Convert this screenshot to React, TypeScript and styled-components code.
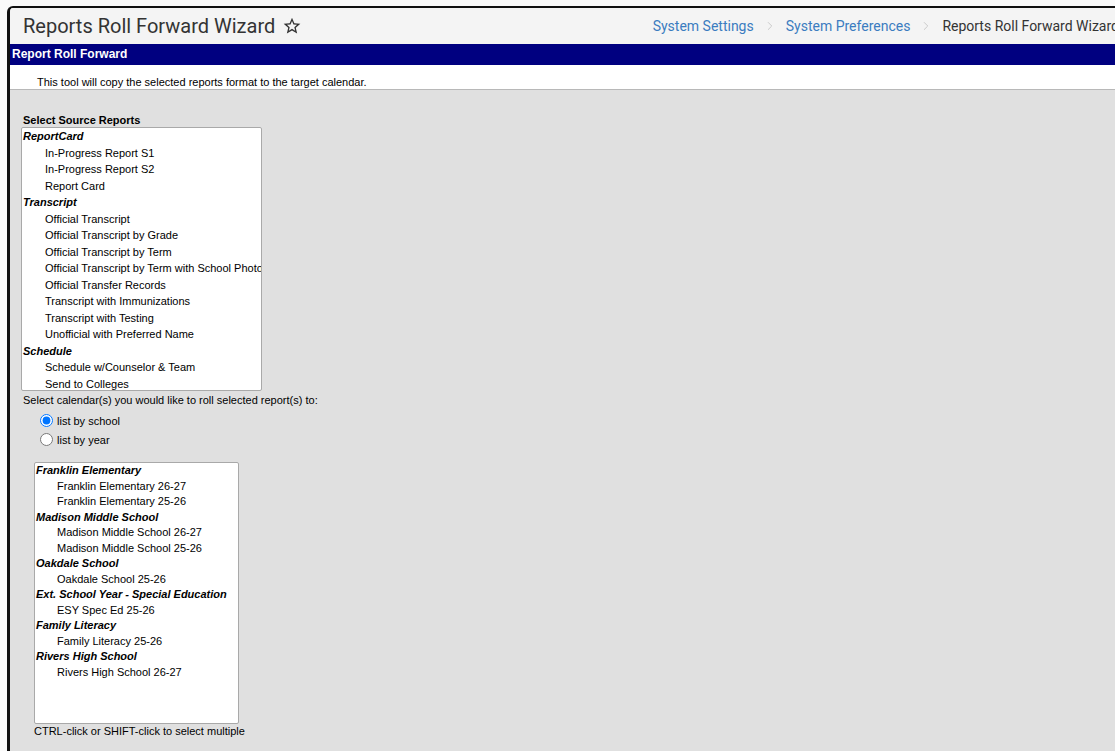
import React from "react";
import { styled, createGlobalStyle } from "styled-components";
import { MdStarBorder } from "react-icons/md";
import { ChevronRight } from "lucide-react";

const GlobalStyle = createGlobalStyle`
  html, body {
    margin: 0;
    padding: 0;
    background: #fafafa;
  }
  body {
    font-family: "Liberation Sans", Arial, sans-serif;
    color: #000;
  }
`;

const Page = styled.div`
  padding: 6px 0 0 7px;
  height: 745px;
  overflow: hidden;
`;

const Frame = styled.div`
  border-top: 2px solid #111;
  border-left: 3px solid #111;
  border-top-left-radius: 6px;
  height: 100%;
  overflow: hidden;
  background: #e0e0e0;
  display: flex;
  flex-direction: column;
`;

const Header = styled.header`
  height: 36px;
  flex-shrink: 0;
  background: #f4f4f4;
  display: flex;
  align-items: center;
  padding-left: 13px;
  font-family: Roboto, "Liberation Sans", sans-serif;
`;

const PageTitle = styled.h1`
  margin: 0;
  font-size: 20px;
  font-weight: 400;
  color: #333;
  display: flex;
  align-items: center;
  gap: 7px;
  white-space: nowrap;
`;

const Crumbs = styled.nav`
  margin-left: auto;
  margin-right: -4px;
  display: flex;
  align-items: center;
  gap: 9px;
  font-size: 14px;
  white-space: nowrap;
`;

const Crumb = styled.span<{ $current?: boolean }>`
  color: ${(p) => (p.$current ? "#333" : "#3b7cc0")};
`;

const Banner = styled.div`
  height: 21px;
  flex-shrink: 0;
  background: #000080;
  color: #fff;
  font-weight: bold;
  font-size: 12px;
  line-height: 21px;
  padding-left: 2px;
`;

const Intro = styled.div`
  height: 24px;
  flex-shrink: 0;
  background: #fff;
  border-bottom: 1px solid #b8b8b8;
  font-size: 11px;
  line-height: 34px;
  padding-left: 27px;
`;

const Body = styled.main`
  padding: 24px 0 0 11px;
  font-size: 11px;
  display: flex;
  flex-direction: column;
  align-items: flex-start;
`;

const FieldLabel = styled.div`
  font-weight: bold;
  padding-left: 2px;
  line-height: 13px;
`;

const ListBox = styled.div<{ $width: number; $height: number; $inset?: number; $top?: number }>`
  width: ${(p) => p.$width}px;
  height: ${(p) => p.$height}px;
  margin: ${(p) => p.$top ?? 0}px 0 0 ${(p) => p.$inset ?? 0}px;
  box-sizing: border-box;
  background: #fff;
  border: 1px solid #a9a9a9;
  border-radius: 2px;
  overflow: hidden;
`;

const GroupLabel = styled.div<{ $row: number }>`
  font-weight: bold;
  font-style: italic;
  padding-left: 1px;
  height: ${(p) => p.$row}px;
  line-height: ${(p) => p.$row}px;
  white-space: nowrap;
`;

const Option = styled.div<{ $indent: number; $row: number }>`
  padding-left: ${(p) => p.$indent}px;
  height: ${(p) => p.$row}px;
  line-height: ${(p) => p.$row}px;
  white-space: nowrap;
`;

const Prompt = styled.div`
  padding-left: 2px;
  margin-top: 3px;
  line-height: 13px;
`;

const RadioGroup = styled.div`
  display: flex;
  flex-direction: column;
  gap: 6px;
  margin: 7px 0 0 19px;
`;

const RadioRow = styled.label`
  display: flex;
  align-items: center;
  gap: 4px;
  input {
    margin: 0;
    width: 13px;
    height: 13px;
  }
`;

const Hint = styled.div`
  margin: 1px 0 0 13px;
`;

type Group = { name: string; items: string[] };

const reports: Group[] = [
  { name: "ReportCard", items: ["In-Progress Report S1", "In-Progress Report S2", "Report Card"] },
  {
    name: "Transcript",
    items: [
      "Official Transcript",
      "Official Transcript by Grade",
      "Official Transcript by Term",
      "Official Transcript by Term with School Photo",
      "Official Transfer Records",
      "Transcript with Immunizations",
      "Transcript with Testing",
      "Unofficial with Preferred Name",
    ],
  },
  { name: "Schedule", items: ["Schedule w/Counselor & Team", "Send to Colleges"] },
];

const calendars: Group[] = [
  { name: "Franklin Elementary", items: ["Franklin Elementary 26-27", "Franklin Elementary 25-26"] },
  { name: "Madison Middle School", items: ["Madison Middle School 26-27", "Madison Middle School 25-26"] },
  { name: "Oakdale School", items: ["Oakdale School 25-26"] },
  { name: "Ext. School Year - Special Education", items: ["ESY Spec Ed 25-26"] },
  { name: "Family Literacy", items: ["Family Literacy 25-26"] },
  { name: "Rivers High School", items: ["Rivers High School 26-27"] },
];

const GroupedList = ({ groups, indent, row }: { groups: Group[]; indent: number; row: number }) => (
  <>
    {groups.map((g) => (
      <React.Fragment key={g.name}>
        <GroupLabel $row={row}>{g.name}</GroupLabel>
        {g.items.map((it) => (
          <Option key={it} $indent={indent} $row={row}>
            {it}
          </Option>
        ))}
      </React.Fragment>
    ))}
  </>
);

const App = () => {
  const [mode, setMode] = React.useState("school");
  return (
    <>
      <GlobalStyle />
      <Page>
        <Frame>
          <Header>
            <PageTitle>
              Reports Roll Forward Wizard
              <MdStarBorder size={20} color="#333" />
            </PageTitle>
            <Crumbs>
              <Crumb>System Settings</Crumb>
              <ChevronRight size={14} strokeWidth={1.5} color="#c4c4c4" />
              <Crumb>System Preferences</Crumb>
              <ChevronRight size={14} strokeWidth={1.5} color="#c4c4c4" />
              <Crumb $current>Reports Roll Forward Wizard</Crumb>
            </Crumbs>
          </Header>
          <Banner>Report Roll Forward</Banner>
          <Intro>This tool will copy the selected reports format to the target calendar.</Intro>
          <Body>
            <FieldLabel>Select Source Reports</FieldLabel>
            <ListBox $width={241} $height={264}>
              <GroupedList groups={reports} indent={23} row={16.5} />
            </ListBox>
            <Prompt>Select calendar(s) you would like to roll selected report(s) to:</Prompt>
            <RadioGroup>
              <RadioRow>
                <input
                  type="radio"
                  name="listMode"
                  checked={mode === "school"}
                  onChange={() => setMode("school")}
                />
                list by school
              </RadioRow>
              <RadioRow>
                <input
                  type="radio"
                  name="listMode"
                  checked={mode === "year"}
                  onChange={() => setMode("year")}
                />
                list by year
              </RadioRow>
            </RadioGroup>
            <ListBox $width={205} $height={262} $inset={13} $top={16}>
              <GroupedList groups={calendars} indent={22} row={15.5} />
            </ListBox>
            <Hint>CTRL-click or SHIFT-click to select multiple</Hint>
          </Body>
        </Frame>
      </Page>
    </>
  );
};

export default App;
